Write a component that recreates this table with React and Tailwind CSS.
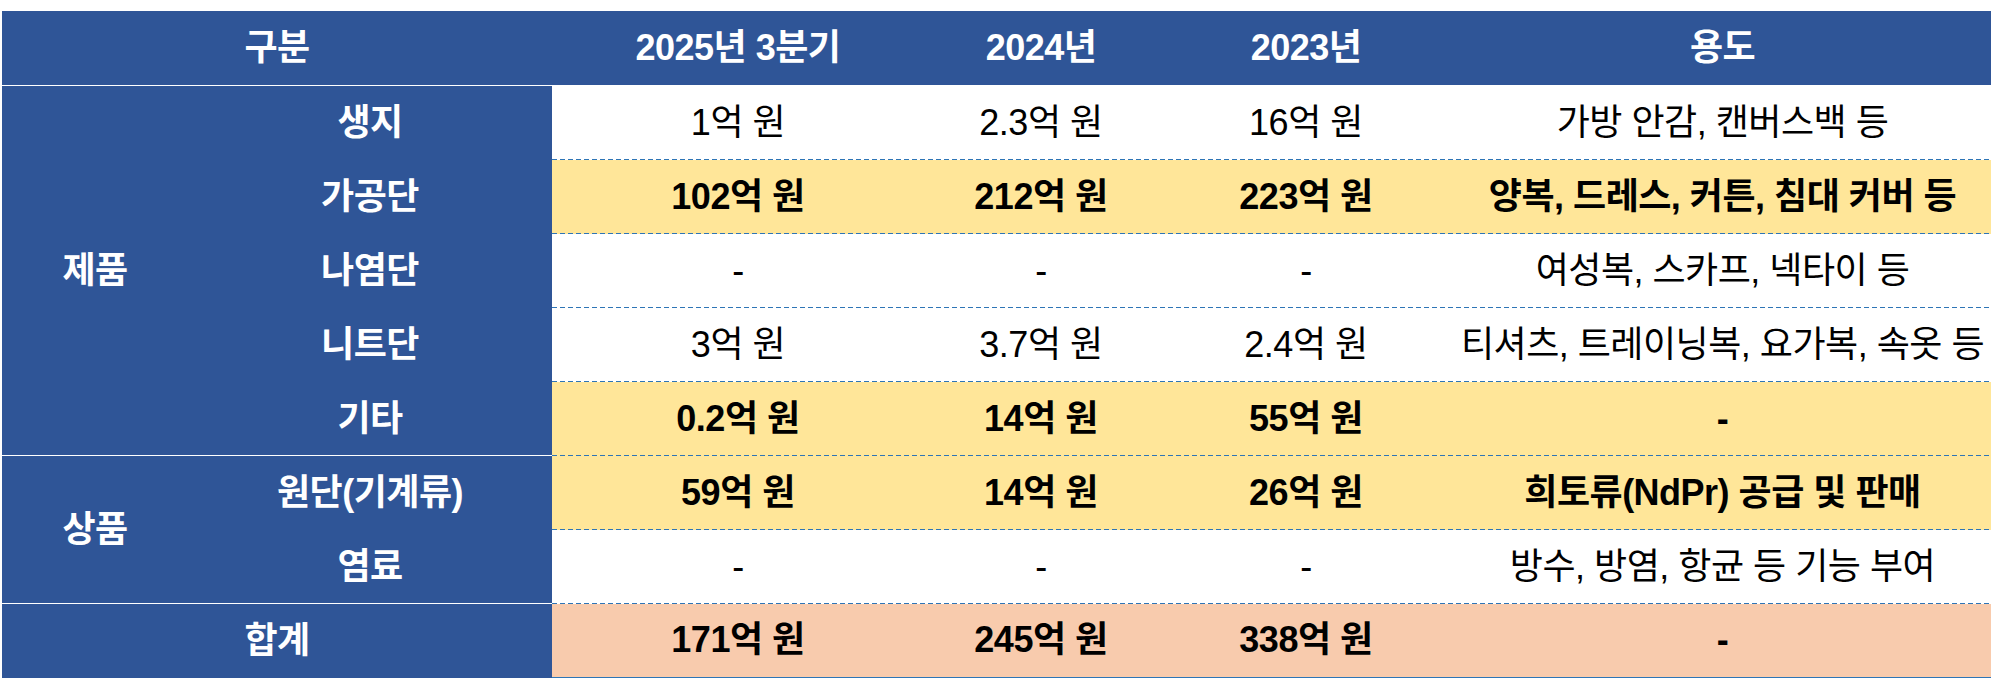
import React from "react";

const FONT = { fontFamily: '"Liberation Sans", "Noto Sans CJK KR", sans-serif' };

const rows = [
  { label: "생지", v: ["1억 원", "2.3억 원", "16억 원"], use: "가방 안감, 캔버스백 등", bg: "bg-white", bold: false },
  { label: "가공단", v: ["102억 원", "212억 원", "223억 원"], use: "양복, 드레스, 커튼, 침대 커버 등", bg: "bg-[#ffe699]", bold: true },
  { label: "나염단", v: ["-", "-", "-"], use: "여성복, 스카프, 넥타이 등", bg: "bg-white", bold: false },
  { label: "니트단", v: ["3억 원", "3.7억 원", "2.4억 원"], use: "티셔츠, 트레이닝복, 요가복, 속옷 등", bg: "bg-white", bold: false },
  { label: "기타", v: ["0.2억 원", "14억 원", "55억 원"], use: "-", bg: "bg-[#ffe699]", bold: true },
  { label: "원단(기계류)", v: ["59억 원", "14억 원", "26억 원"], use: "희토류(NdPr) 공급 및 판매", bg: "bg-[#ffe699]", bold: true },
  { label: "염료", v: ["-", "-", "-"], use: "방수, 방염, 항균 등 기능 부여", bg: "bg-white", bold: false },
  { label: "합계", v: ["171억 원", "245억 원", "338억 원"], use: "-", bg: "bg-[#f8cbad]", bold: true, total: true },
];

const widths = ["w-[372px]", "w-[234px]", "w-[296px]", "w-[537px]"];

function DataRow({ r, last }) {
  const line = last
    ? "border-b border-[#2e75b6]"
    : "bg-[linear-gradient(to_right,#2e75b6_5px,transparent_5px)] [background-size:8px_1px] [background-repeat:repeat-x] [background-position:0_100%]";
  return (
    <div className={`flex h-[74px] ${r.bg}`}>
      <div className={`flex w-full pb-px ${line} ${r.bold ? "font-bold" : "font-normal"} text-black text-[36px] tracking-[-0.5px]`}>
        {[...r.v, r.use].map((t, i) => (
          <div key={i} className={`${widths[i]} flex items-center justify-center whitespace-nowrap`}>
            {t}
          </div>
        ))}
      </div>
    </div>
  );
}

function SubLabel({ text, border }) {
  return (
    <div className={`h-[74px] flex items-center justify-center ${border ? "border-b border-white" : ""}`}>
      {text}
    </div>
  );
}

export default function App() {
  return (
    <div className="bg-white w-[2004px] h-[688px] pt-[11px] pl-[2px]" style={FONT}>
      <div className="w-[1989px]">
        {/* header */}
        <div className="flex h-[75px] bg-[#2f5597] border-b border-white text-white font-bold text-[36px] tracking-[-0.5px]">
          <div className="w-[550px] flex items-center justify-center">구분</div>
          <div className="w-[372px] flex items-center justify-center">2025년 3분기</div>
          <div className="w-[234px] flex items-center justify-center">2024년</div>
          <div className="w-[296px] flex items-center justify-center">2023년</div>
          <div className="w-[537px] flex items-center justify-center">용도</div>
        </div>
        <div className="flex">
          {/* left label block */}
          <div className="w-[550px] bg-[#2f5597] text-white font-bold text-[36px] tracking-[-0.5px] flex flex-col">
            <div className="flex h-[370px] border-b border-white">
              <div className="w-[186px] flex items-center justify-center">제품</div>
              <div className="w-[364px] flex flex-col">
                <SubLabel text="생지" />
                <SubLabel text="가공단" />
                <SubLabel text="나염단" />
                <SubLabel text="니트단" />
                <div className="h-[73px] flex items-center justify-center">기타</div>
              </div>
            </div>
            <div className="flex h-[148px] border-b border-white">
              <div className="w-[186px] flex items-center justify-center">상품</div>
              <div className="w-[364px] flex flex-col">
                <SubLabel text="원단(기계류)" />
                <div className="h-[73px] flex items-center justify-center">염료</div>
              </div>
            </div>
            <div className="h-[74px] flex items-center justify-center">합계</div>
          </div>
          {/* data block */}
          <div className="w-[1439px] flex flex-col">
            {rows.map((r, i) => (
              <DataRow key={i} r={r} last={i === rows.length - 1} />
            ))}
          </div>
        </div>
      </div>
    </div>
  );
}
